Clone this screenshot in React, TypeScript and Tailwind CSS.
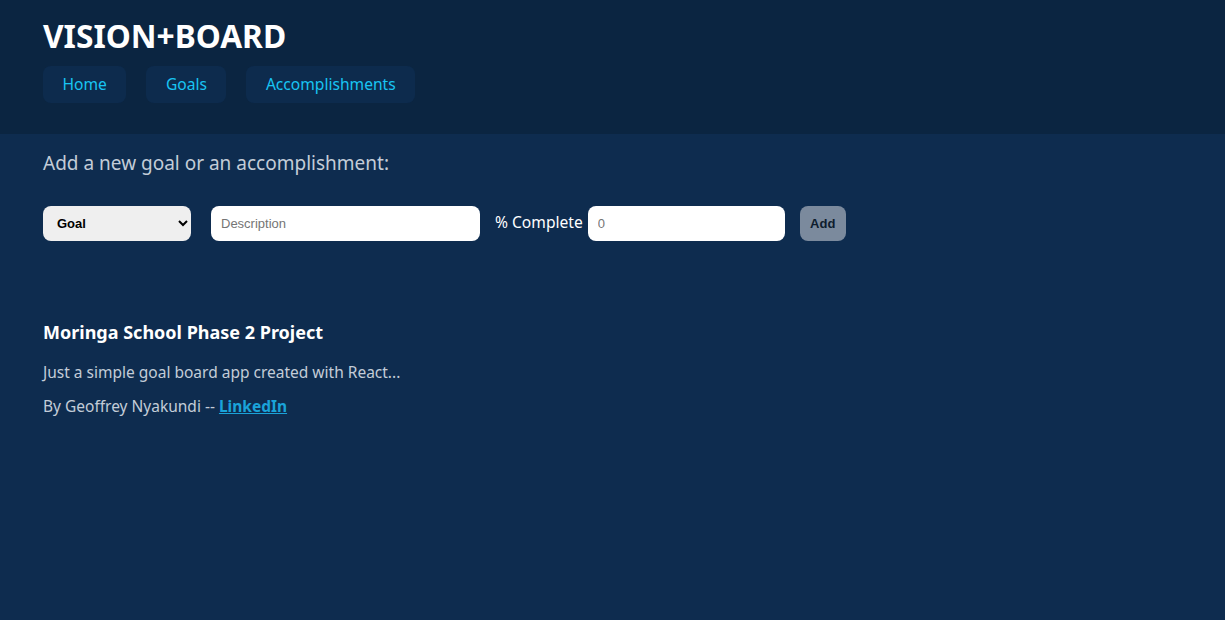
import React, { useState } from 'react';

const NAV = ['Home', 'Goals', 'Accomplishments'];

const App: React.FC = () => {
  const [kind, setKind] = useState('Goal');
  const [desc, setDesc] = useState('');
  const [pct, setPct] = useState('');

  return (
    <div className="min-h-[620px] bg-[#0e2c4f] font-['Noto_Sans',sans-serif]">
      <header className="h-[134px] bg-[#0b2541] px-[43px] pt-[17px]">
        <h1 className="h-[38px] text-[31.7px] font-bold leading-[38px] text-white">VISION+BOARD</h1>
        <nav className="mt-[11px] flex gap-5">
          {NAV.map(item => (
            <a
              key={item}
              href="#"
              className="h-[37px] px-[19.5px] flex items-center rounded-lg bg-[#0d2b4d] text-[15.6px] text-[#18c4f3]"
            >
              {item}
            </a>
          ))}
        </nav>
      </header>

      <main className="px-[43px]">
        <p className="pt-[16px] text-[19px] leading-[26px] text-[#c3ccd8]">Add a new goal or an accomplishment:</p>

        <form className="mt-[30px] flex items-center" onSubmit={e => e.preventDefault()}>
          <select
            value={kind}
            onChange={e => setKind(e.target.value)}
            className="w-[148px] h-[35px] px-[10px] rounded-lg bg-[#efefef] text-[13px] font-bold text-black font-['Liberation_Sans',sans-serif]"
          >
            <option>Goal</option>
            <option>Accomplishment</option>
          </select>
          <input
            value={desc}
            onChange={e => setDesc(e.target.value)}
            placeholder="Description"
            className="ml-5 w-[269px] h-[35px] px-[10px] rounded-lg bg-white text-[13px] text-black placeholder:text-[#757575] font-['Liberation_Sans',sans-serif] outline-none"
          />
          <label className="ml-[15px] text-[15.6px] text-white leading-5 -mt-[3px]">% Complete</label>
          <input
            value={pct}
            onChange={e => setPct(e.target.value)}
            placeholder="0"
            className="ml-[5px] w-[197px] h-[35px] px-[10px] rounded-lg bg-white text-[13px] text-black placeholder:text-[#757575] font-['Liberation_Sans',sans-serif] outline-none"
          />
          <button
            type="submit"
            className="ml-[15px] w-[46px] h-[35px] rounded-lg bg-[#7b8a9d] text-[13px] font-bold text-[#0e1d2e] font-['Liberation_Sans',sans-serif]"
          >
            Add
          </button>
        </form>

        <section className="mt-[79px]">
          <h3 className="text-[18px] font-bold leading-6 text-white">Moringa School Phase 2 Project</h3>
          <p className="mt-[17px] text-[15.5px] leading-[22px] text-[#c3ccd8]">Just a simple goal board app created with React...</p>
          <p className="mt-[12px] text-[15.5px] leading-[22px] text-[#c3ccd8]">
            By Geoffrey Nyakundi -- <a href="#" className="font-bold underline text-[#1aa3d9]">LinkedIn</a>
          </p>
        </section>
      </main>
    </div>
  );
};

export default App;
